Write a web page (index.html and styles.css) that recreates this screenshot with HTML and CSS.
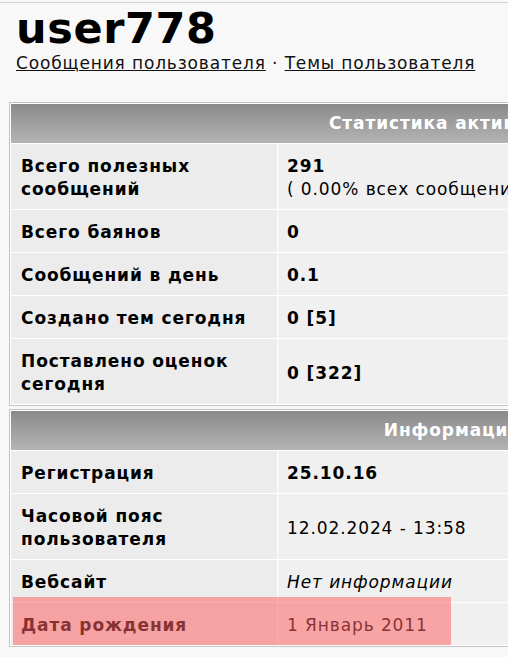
FILE: index.html
```html
<!DOCTYPE html>
<html lang="ru">
<head>
<meta charset="utf-8">
<title>user778</title>
<link rel="stylesheet" href="styles.css">
</head>
<body>
<div class="page">
  <div class="top">
    <h1 class="username">user778</h1>
    <div class="links"><a href="#">Сообщения пользователя</a> · <a href="#">Темы пользователя</a></div>
  </div>
  <div class="tables">
    <table class="box">
      <tr><th colspan="2" class="head">Статистика активности</th></tr>
      <tr><td class="lbl">Всего полезных сообщений</td><td class="val"><b>291</b><br>( 0.00% всех сообщений )</td></tr>
      <tr><td class="lbl">Всего баянов</td><td class="val"><b>0</b></td></tr>
      <tr><td class="lbl">Сообщений в день</td><td class="val"><b>0.1</b></td></tr>
      <tr><td class="lbl">Создано тем сегодня</td><td class="val"><b>0 [5]</b></td></tr>
      <tr><td class="lbl">Поставлено оценок сегодня</td><td class="val"><b>0 [322]</b></td></tr>
    </table>
    <table class="box">
      <tr><th colspan="2" class="head">Информация</th></tr>
      <tr><td class="lbl">Регистрация</td><td class="val"><b>25.10.16</b></td></tr>
      <tr><td class="lbl">Часовой пояс пользователя</td><td class="val">12.02.2024 - 13:58</td></tr>
      <tr><td class="lbl">Вебсайт</td><td class="val"><i>Нет информации</i></td></tr>
      <tr><td class="lbl">Дата рождения</td><td class="val">1 Январь 2011</td></tr>
    </table>
  </div>
  <div class="highlight"></div>
</div>
</body>
</html>
```
FILE: styles.css
```css
html, body {
  margin: 0;
  padding: 0;
  overflow: hidden;
  background: #f8f8f8;
}
body {
  font-family: "DejaVu Sans", Verdana, sans-serif;
  color: #000;
}
.page {
  position: relative;
  margin-top: 2px;
  border-top: 1px solid #d2d2d2;
  width: 100%;
  overflow: hidden;
  height: 654px;
}
.top {
  padding: 0 0 0 16px;
}
.username {
  margin: 0;
  font-size: 43px;
  line-height: 48px;
  font-weight: bold;
  letter-spacing: 0.6px;
  padding-top: 1px;
}
.links {
  font-size: 17px;
  line-height: 22px;
  letter-spacing: 0.85px;
  color: #111;
}
.links a {
  color: #111;
  text-decoration: underline;
}
.tables {
  padding: 28px 0 0 9px;
  display: flex;
  flex-direction: column;
  gap: 3px;
  width: 886px;
}
.box {
  width: 886px;
  border: 1px solid #c4c4c4;
  border-collapse: separate;
  border-spacing: 1px;
  background: #fff;
  font-size: 17px;
  line-height: 23px;
  letter-spacing: 0.9px;
}
.head {
  background: linear-gradient(#8a8a8a, #b4b4b4);
  color: #fff;
  font-weight: bold;
  text-align: center;
  padding: 8px 10px;
  height: 22px;
}
.lbl {
  width: 246px;
  background: #ececec;
  font-weight: bold;
  padding: 11px 10px 8px 10px;
  vertical-align: middle;
}
.val {
  background: #f0f0f0;
  padding: 11px 10px 8px 9px;
  vertical-align: middle;
}
.highlight {
  position: absolute;
  left: 13px;
  top: 594px;
  width: 438px;
  height: 48px;
  background: rgba(255, 96, 96, 0.53);
}
```
